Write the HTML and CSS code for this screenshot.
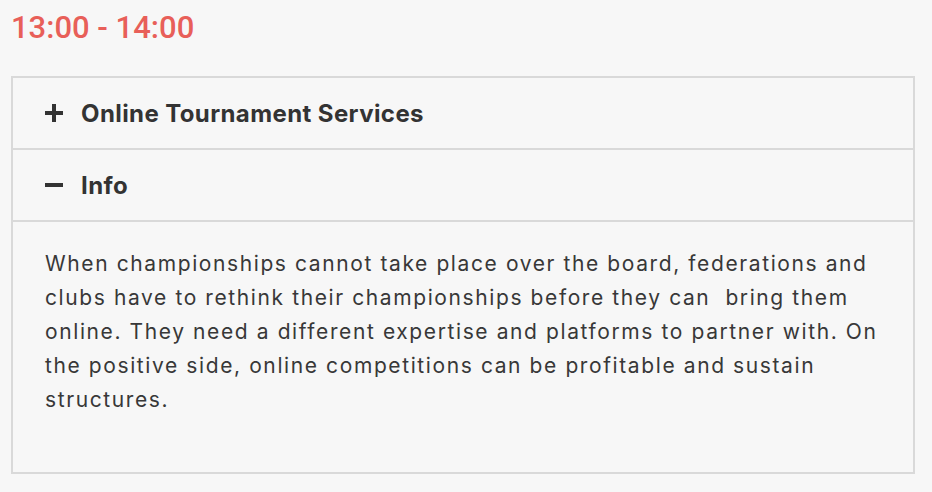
FILE: index.html
```html
<!DOCTYPE html>
<html>
<head lang="en">
    <meta charset="UTF-8">
    <title>Schedule</title>
    <link rel="stylesheet" href="styles.css">
</head>
<body>
<div class="slot">
    <h1 class="time">13:00 - 14:00</h1>
    <div class="acc">
        <div class="acc-head">
            <svg class="ico" viewBox="0 0 20 20"><path d="M10 1v18M1 10h18"/></svg>
            <span>Online Tournament Services</span>
        </div>
        <div class="acc-head open">
            <svg class="ico" viewBox="0 0 20 20"><path d="M1 10h18"/></svg>
            <span>Info</span>
        </div>
        <div class="acc-body">
            <p>When championships cannot take place over the board, federations and clubs have to rethink their championships before they can &nbsp;bring them online. They need a different expertise and platforms to partner with. On the positive side, online competitions can be profitable and sustain structures.</p>
        </div>
    </div>
</div>
</body>
</html>
```

FILE: styles.css
```css
*{margin:0;padding:0;box-sizing:border-box;}
html,body{background:#f7f7f7;}
body{font-family:Inter,"Open Sans",sans-serif;color:#383838;}
.slot{padding:8px 0 0 11px;width:915px;}
.time{font-family:Roboto,"Liberation Sans",sans-serif;font-weight:500;font-size:31px;line-height:40px;color:#e85f59;margin-bottom:28px;}
.acc{border:2px solid #d9d9d9;}
.acc-head{display:flex;align-items:center;height:72px;padding-left:31px;border-bottom:2px solid #d9d9d9;font-family:Inter,Roboto,sans-serif;font-weight:700;font-size:24px;letter-spacing:0.4px;color:#333;}
.ico{width:20px;height:20px;margin-right:17px;fill:none;stroke:#333;stroke-width:4;}
.acc-body{padding:25px 32px 55px 32px;}
.acc-body p{font-size:21px;line-height:34px;letter-spacing:1.6px;}
```
